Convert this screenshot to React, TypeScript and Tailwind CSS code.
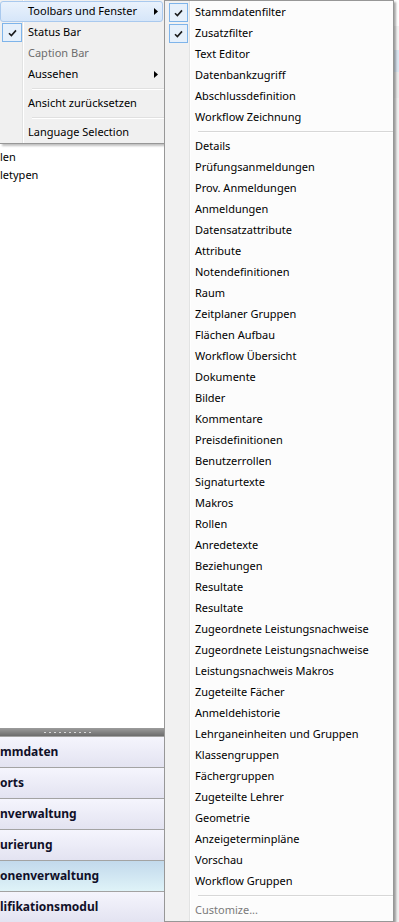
import React from "react";

const font = { fontFamily: '"Noto Sans", "Open Sans", sans-serif' };

type Row = { label?: string; sep?: boolean; checked?: boolean; disabled?: boolean; arrow?: boolean; active?: boolean };

const mainMenu: Row[] = [
  { label: "Toolbars und Fenster", arrow: true, active: true },
  { label: "Status Bar", checked: true },
  { label: "Caption Bar", disabled: true },
  { label: "Aussehen", arrow: true },
  { sep: true },
  { label: "Ansicht zurücksetzen" },
  { sep: true },
  { label: "Language Selection" },
];

const subLabels = [
  "Details",
  "Prüfungsanmeldungen",
  "Prov. Anmeldungen",
  "Anmeldungen",
  "Datensatzattribute",
  "Attribute",
  "Notendefinitionen",
  "Raum",
  "Zeitplaner Gruppen",
  "Flächen Aufbau",
  "Workflow Übersicht",
  "Dokumente",
  "Bilder",
  "Kommentare",
  "Preisdefinitionen",
  "Benutzerrollen",
  "Signaturtexte",
  "Makros",
  "Rollen",
  "Anredetexte",
  "Beziehungen",
  "Resultate",
  "Resultate",
  "Zugeordnete Leistungsnachweise",
  "Zugeordnete Leistungsnachweise",
  "Leistungsnachweis Makros",
  "Zugeteilte Fächer",
  "Anmeldehistorie",
  "Lehrganeinheiten und Gruppen",
  "Klassengruppen",
  "Fächergruppen",
  "Zugeteilte Lehrer",
  "Geometrie",
  "Anzeigeterminpläne",
  "Vorschau",
  "Workflow Gruppen",
];

const subMenu: Row[] = [
  { label: "Stammdatenfilter", checked: true },
  { label: "Zusatzfilter", checked: true },
  { label: "Text Editor" },
  { label: "Datenbankzugriff" },
  { label: "Abschlussdefinition" },
  { label: "Workflow Zeichnung" },
  { sep: true },
  ...subLabels.map((l) => ({ label: l })),
  { sep: true },
  { label: "Customize...", disabled: true },
];

const navButtons = [
  { label: "mmdaten" },
  { label: "orts" },
  { label: "nverwaltung" },
  { label: "urierung" },
  { label: "onenverwaltung", selected: true },
  { label: "lifikationsmodul" },
];

function Check() {
  return (
    <svg width="9" height="8" viewBox="0 0 9 8" className="block">
      <path d="M1 4.2 L3.4 6.6 L8 1.4" fill="none" stroke="#1c1c1c" strokeWidth="1.6" />
    </svg>
  );
}

function Arrow() {
  return (
    <svg width="4" height="7" viewBox="0 0 4 7" className="block">
      <path d="M0 0 L4 3.5 L0 7 Z" fill="#000" />
    </svg>
  );
}

export default function App() {
  return (
    <div className="relative w-[399px] h-[922px] overflow-hidden bg-[#f0f0f0] text-[11px] text-black" style={font}>
      {/* Base application layout */}
      <div className="flex h-full">
        <div className="flex w-[165px] flex-col border-r border-[#8e8e8e]">
          <div className="flex-1 bg-white pt-[148px]">
            <div className="flex h-[18px] items-center">len</div>
            <div className="flex h-[18px] items-center">letypen</div>
          </div>
          <div className="flex h-[8px] items-center justify-center bg-[linear-gradient(#9c9c9c,#6c6c6c)] pr-[30px]">
            <div className="flex gap-[3px]">
              {Array.from({ length: 10 }).map((_, i) => (
                <div key={i} className="h-[1px] w-[2px] bg-[#d8d8d8]" />
              ))}
            </div>
          </div>
          {navButtons.map((b, i) => (
            <div
              key={i}
              className={
                "flex h-[31px] items-center border-t border-[#a3a3a3] text-[12px] font-bold text-[#101028] " +
                (b.selected
                  ? "bg-[linear-gradient(#c2d9ec,#dff3f8)]"
                  : "bg-[linear-gradient(#f5f5fd,#e3e3f1)]")
              }
            >
              {b.label}
            </div>
          ))}
        </div>
        <div className="flex flex-1 flex-col">
          <div className="h-[26px] bg-white" />
          <div className="h-[24px] bg-[#f4f4f4]" />
          <div className="h-[22px] bg-[#dce7f2]" />
          <div className="h-[26px] border-l border-[#a0a0a0] bg-[#ececec]" />
          <div className="flex-1 border-l border-[#a0a0a0] bg-[#f0f0f0]" />
        </div>
      </div>

      {/* Main popup menu */}
      <div className="absolute left-0 top-0 w-[165px] border-b border-r border-[#979797] bg-[#f0f0f0] bg-[linear-gradient(to_right,#f0f0f0_0,#f0f0f0_22px,#e2e3e3_22px,#e2e3e3_23px,#ffffff_23px,#ffffff_24px,#f0f0f0_24px)] pt-[1px] shadow-[2px_2px_2px_rgba(0,0,0,0.25)]">
        {mainMenu.map((r, i) =>
          r.sep ? (
            <div key={i} className="flex h-[8px] items-center pl-[32px]">
              <div className="h-[2px] w-full border-t border-[#e0e0e0] border-b-white" style={{ borderBottomWidth: 1 }} />
            </div>
          ) : (
            <div key={i} className="relative flex h-[21px] items-center">
              {r.active && (
                <div className="absolute left-0 right-[1px] top-0 bottom-0 rounded-[3px] border border-[#a9c9ee] bg-[linear-gradient(#eaf2fc,#d6e6f9)]" />
              )}
              {r.checked && (
                <div className="absolute left-[2px] top-[1px] flex h-[19px] w-[20px] items-center justify-center border border-[#7eb4ea] bg-[#e6f0fb]">
                  <Check />
                </div>
              )}
              <span className={"relative pl-[28px] " + (r.disabled ? "text-[#6d6d6d]" : "")}>{r.label}</span>
              {r.arrow && (
                <div className="absolute right-[6px] top-[7px]">
                  <Arrow />
                </div>
              )}
            </div>
          )
        )}
      </div>

      {/* Sub menu */}
      <div className="absolute left-[164px] top-0 h-[922px] w-[230px] border border-[#979797] bg-[linear-gradient(to_right,#f1f1f1_0,#f1f1f1_24px,#e2e3e3_24px,#e2e3e3_25px,#ffffff_25px,#ffffff_26px,#fcfcfc_26px)] pt-[1px] shadow-[2px_2px_2px_rgba(0,0,0,0.35)]">
        {subMenu.map((r, i) =>
          r.sep ? (
            <div key={i} className="flex h-[8px] items-center pl-[33px]">
              <div className="h-[2px] w-full border-t border-[#d7d7d7] border-b-white" style={{ borderBottomWidth: 1 }} />
            </div>
          ) : (
            <div key={i} className="relative flex h-[21px] items-center">
              {r.checked && (
                <div className="absolute left-[4px] top-[1px] flex h-[19px] w-[19px] items-center justify-center border border-[#7eb4ea] bg-[#e6f0fb]">
                  <Check />
                </div>
              )}
              <span className={"relative pl-[30px] " + (r.disabled ? "text-[#7a7a7a]" : "")}>{r.label}</span>
            </div>
          )
        )}
      </div>
    </div>
  );
}
